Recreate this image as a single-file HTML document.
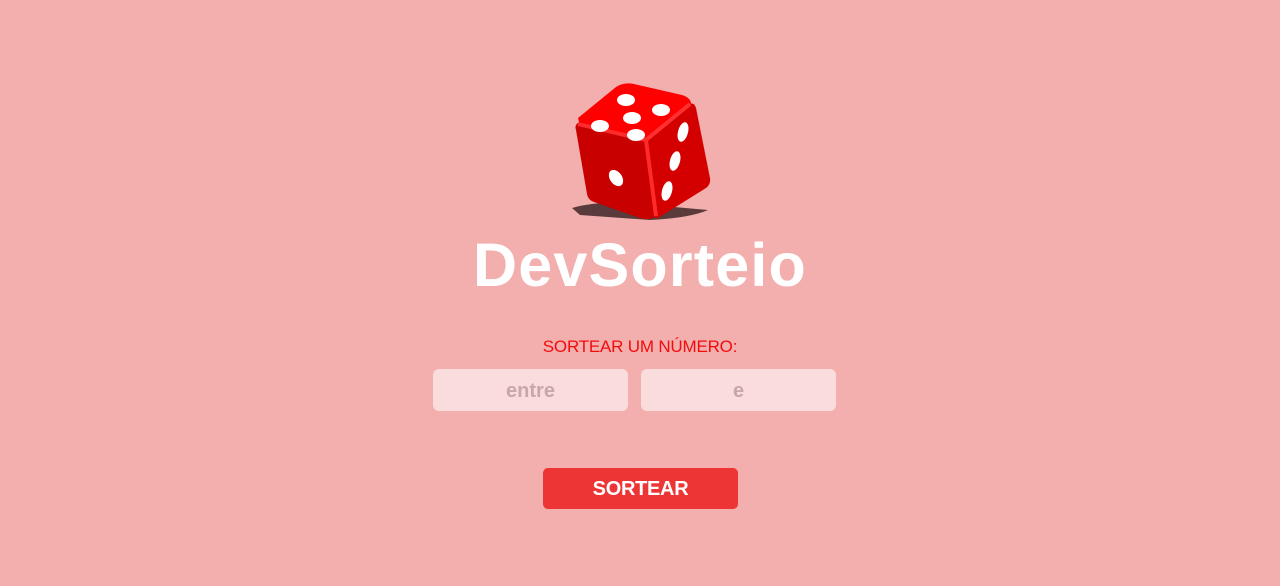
<!DOCTYPE html>
<html><head><meta charset="utf-8"><style>
html,body{margin:0;padding:0;width:1280px;height:586px;background:#f3aeae;overflow:hidden;font-family:"Liberation Sans",sans-serif;}
.dice{position:absolute;left:560px;top:75px;}
.title{position:absolute;left:0;width:1280px;top:230px;text-align:center;color:#fff;font-weight:bold;font-size:61px;line-height:70px;letter-spacing:1.2px;}
.lbl{position:absolute;left:0;width:1280px;top:337px;text-align:center;color:#f20d0d;font-size:17px;line-height:20px;letter-spacing:-0.2px;}
.in{position:absolute;top:369px;width:195px;height:42px;background:#fadcdc;border-radius:6px;color:#c9a6a8;font-weight:bold;font-size:20px;line-height:44px;text-align:center;}
.btn{position:absolute;left:543px;top:468px;width:195px;height:41px;background:#ee3535;border-radius:5px;color:#fff;font-weight:bold;font-size:20px;line-height:42px;text-align:center;letter-spacing:-0.3px;}
</style></head><body>
<svg class="dice" width="160" height="155" viewBox="560 75 160 155">
<path d="M572 208 Q600 200 640 204 L708 210 Q690 218 650 220 L580 215 Z" fill="#5a3a3a"/>
<path d="M578 118 L616 87 Q624 82 634 84 L682 95 Q694 99 690 108 L648 140 L580 126 Z" fill="#f00"/>
<path d="M576 130 Q574 124 580 122 L646 140 L656 216 Q650 221 640 218 L594 202 Q588 200 587 194 Z" fill="#c80000"/>
<path d="M646 140 L690 104 Q694 102 696 108 L710 178 Q711 184 706 188 L658 218 Q654 219 654 214 Z" fill="#d40000"/>
<path d="M646 140 L690 104" stroke="#ff3030" stroke-width="4"/>
<path d="M578 124 L646 140 L656 216" stroke="#ff2a2a" stroke-width="4" fill="none"/>
<g fill="#fff">
<ellipse cx="626" cy="100" rx="9" ry="6"/>
<ellipse cx="661" cy="110" rx="9" ry="6"/>
<ellipse cx="632" cy="118" rx="9" ry="6"/>
<ellipse cx="600" cy="126" rx="9" ry="6"/>
<ellipse cx="636" cy="135" rx="9" ry="6"/>
<ellipse cx="616" cy="178" rx="6" ry="9" transform="rotate(-35 616 178)"/>
<ellipse cx="683" cy="132" rx="5" ry="10" transform="rotate(15 683 132)"/>
<ellipse cx="675" cy="161" rx="5" ry="10" transform="rotate(15 675 161)"/>
<ellipse cx="667" cy="191" rx="5" ry="10" transform="rotate(15 667 191)"/>
</g>
</svg>
<div class="title">DevSorteio</div>
<div class="lbl">SORTEAR UM NÚMERO:</div>
<div class="in" style="left:433px">entre</div>
<div class="in" style="left:641px">e</div>
<div class="btn">SORTEAR</div>
</body></html>
